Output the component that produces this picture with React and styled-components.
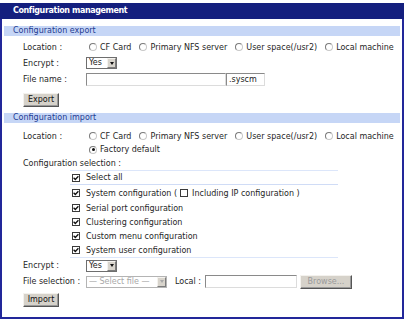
import React from 'react';
import styled, { createGlobalStyle } from 'styled-components';

const Global = createGlobalStyle`
  html, body { margin: 0; padding: 0; background: #fff; }
  body {
    font-family: "DejaVu Sans", Verdana, sans-serif;
    font-size: 8px;
    color: #262626;
  }
  * { box-sizing: border-box; }
`;

const Panel = styled.div`
  width: 404px;
  height: 316px;
  margin-top: 3px;
  border: 2px solid #22279a;
  border-top: none;
  display: flex;
  flex-direction: column;
`;

const TitleBar = styled.div`
  height: 16px;
  margin: 0 -2px;
  padding-left: 13px;
  background: #141f7e;
  color: #fff;
  font-weight: bold;
  letter-spacing: -0.4px;
  line-height: 16px;
  white-space: nowrap;
`;

const Body = styled.div`
  padding: 0 2px;
  display: flex;
  flex-direction: column;
`;

const SectionHeader = styled.div`
  margin-top: ${(p) => p.$top}px;
  height: 10px;
  line-height: 10px;
  padding-left: 9px;
  background: #c6d6f6;
  color: #1f3c92;
  white-space: nowrap;
`;

const Rows = styled.div`
  padding-left: 19px;
  margin-top: ${(p) => p.$top || 0}px;
  display: flex;
  flex-direction: column;
`;

const Row = styled.div`
  display: grid;
  grid-template-columns: 63px 1fr;
  align-items: center;
  height: ${(p) => p.$h || 16}px;
  white-space: nowrap;
`;

const Label = styled.span`
  color: #262626;
`;

const Controls = styled.div`
  display: flex;
  align-items: center;
  gap: ${(p) => p.$gap || 0}px;
`;

const Choice = styled.label`
  display: inline-flex;
  align-items: center;
  gap: 3px;
  margin-left: ${(p) => (p.$first ? 3 : 0)}px;
  margin-right: 8px;
`;

const Radio = styled.span`
  position: relative;
  width: 8px;
  height: 8px;
  border-radius: 50%;
  border: 1px solid #c8c8c8;
  border-top-color: #7a7a7a;
  border-left-color: #7a7a7a;
  background: #fff;
  flex: none;
  &::after {
    content: '';
    display: ${(p) => (p.$checked ? 'block' : 'none')};
    position: absolute;
    left: 1.5px;
    top: 1.5px;
    width: 3px;
    height: 3px;
    border-radius: 50%;
    background: #111;
  }
`;

const Select = styled.div`
  display: flex;
  align-items: center;
  width: ${(p) => p.$w}px;
  height: 12px;
  border: 1px solid ${(p) => (p.$disabled ? '#b4b4b4' : '#6e6e6e')};
  background: #fff;
  color: ${(p) => (p.$disabled ? '#a8a8a8' : '#222')};
  padding-left: 2px;
`;

const SelectText = styled.span`
  flex: 1;
  overflow: hidden;
  line-height: 10px;
`;

const SelectArrow = styled.span`
  width: 9px;
  height: 10px;
  background: #d8d4cc;
  border: 1px solid;
  border-color: #f4f2ee #7c7c7c #7c7c7c #f4f2ee;
  display: flex;
  align-items: center;
  justify-content: center;
  &::after {
    content: '';
    border-left: 2.5px solid transparent;
    border-right: 2.5px solid transparent;
    border-top: 3px solid ${(p) => (p.$disabled ? '#a8a8a8' : '#111')};
  }
`;

const TextBox = styled.div`
  width: ${(p) => p.$w}px;
  height: 13px;
  border: 1px solid;
  border-color: #8a8a8a #dcdcdc #dcdcdc #8a8a8a;
  background: #fff;
  padding-left: 2px;
  line-height: 11px;
  color: #222;
`;

const Button = styled.button`
  font-family: inherit;
  font-size: 8px;
  height: 14px;
  width: ${(p) => p.$w}px;
  margin: ${(p) => p.$m};
  padding: 0;
  background: #d6d2ca;
  color: ${(p) => (p.$disabled ? '#9a9a9a' : '#111')};
  border: 1px solid;
  border-color: #f4f2ee #555 #555 #f4f2ee;
  box-shadow: inset -1px -1px 0 #9a9a9a;
  text-align: center;
  line-height: 12px;
`;

const FullRow = styled.div`
  height: ${(p) => p.$h}px;
  display: flex;
  align-items: center;
  white-space: nowrap;
`;

const CheckTable = styled.div`
  margin-left: 47px;
  width: 268px;
  border-top: 1px solid #dce6fa;
  border-bottom: 1px solid #dce6fa;
  display: flex;
  flex-direction: column;
`;

const CheckRow = styled.div`
  display: flex;
  align-items: center;
  gap: 6px;
  padding-left: 2px;
  height: ${(p) => p.$h || 14}px;
  border-bottom: ${(p) => (p.$divider ? '1px solid #d0dcf6' : 'none')};
  white-space: nowrap;
`;

const Box = styled.span`
  width: 8px;
  height: 8px;
  border: 1px solid #3a3a3a;
  background: #fff;
  flex: none;
  display: inline-flex;
  align-items: center;
  justify-content: center;
  margin: ${(p) => p.$m || 0};
`;

const Check = ({ on, m }) => (
  <Box $m={m}>
    {on && (
      <svg width="6" height="6" viewBox="0 0 6 6">
        <path d="M0.6 2.8 L2.3 4.5 L5.4 1.2" fill="none" stroke="#111" strokeWidth="1.3" />
      </svg>
    )}
  </Box>
);

const LocationChoices = () => (
  <Controls>
    <Choice $first><Radio />CF Card</Choice>
    <Choice><Radio />Primary NFS server</Choice>
    <Choice><Radio />User space(/usr2)</Choice>
    <Choice><Radio />Local machine</Choice>
  </Controls>
);

const YesSelect = () => (
  <Select $w={31}>
    <SelectText>Yes</SelectText>
    <SelectArrow />
  </Select>
);

export default function App() {
  return (
    <>
      <Global />
      <Panel>
        <TitleBar>Configuration management</TitleBar>
        <Body>
          <SectionHeader $top={7}>Configuration export</SectionHeader>
          <Rows $top={3}>
            <Row>
              <Label>Location :</Label>
              <LocationChoices />
            </Row>
            <Row>
              <Label>Encrypt :</Label>
              <Controls><YesSelect /></Controls>
            </Row>
            <Row>
              <Label>File name :</Label>
              <Controls>
                <TextBox $w={140} />
                <TextBox $w={39}>.syscm</TextBox>
              </Controls>
            </Row>
            <FullRow $h={20}>
              <Button $w={36} $m="5px 0 0 0">Export</Button>
            </FullRow>
          </Rows>

          <SectionHeader $top={6}>Configuration import</SectionHeader>
          <Rows $top={6}>
            <Row $h={14}>
              <Label>Location :</Label>
              <LocationChoices />
            </Row>
            <Row $h={13}>
              <span />
              <Controls>
                <Choice $first><Radio $checked />Factory default</Choice>
              </Controls>
            </Row>
            <FullRow $h={14}>Configuration selection :</FullRow>
            <CheckTable>
              <CheckRow $h={14} $divider>
                <Check on />Select all
              </CheckRow>
              <CheckRow $h={16}>
                <Check on />
                <span>System configuration (</span>
                <Check m="0 -2px 0 -3px" />
                <span>Including IP configuration )</span>
              </CheckRow>
              <CheckRow><Check on />Serial port configuration</CheckRow>
              <CheckRow><Check on />Clustering configuration</CheckRow>
              <CheckRow><Check on />Custom menu configuration</CheckRow>
              <CheckRow><Check on />System user configuration</CheckRow>
            </CheckTable>
            <Row $h={15}>
              <Label>Encrypt :</Label>
              <Controls><YesSelect /></Controls>
            </Row>
            <Row $h={17}>
              <Label>File selection :</Label>
              <Controls $gap={0}>
                <Select $w={81} $disabled>
                  <SelectText>— Select file —</SelectText>
                  <SelectArrow $disabled />
                </Select>
                <Label style={{ margin: '0 4px 0 8px' }}>Local :</Label>
                <TextBox $w={92} />
                <Button $w={52} $m="0 0 0 3px" $disabled>Browse...</Button>
              </Controls>
            </Row>
            <FullRow $h={18}>
              <Button $w={36} $m="2px 0 0 0">Import</Button>
            </FullRow>
          </Rows>
        </Body>
      </Panel>
    </>
  );
}
